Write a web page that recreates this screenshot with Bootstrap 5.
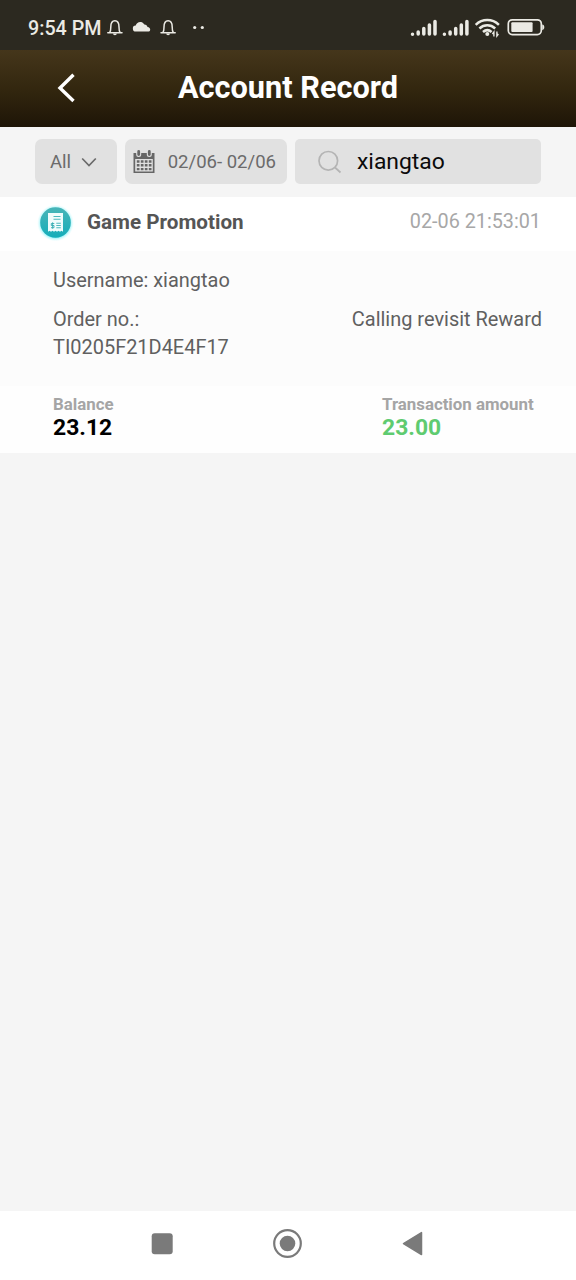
<!DOCTYPE html>
<html lang="en">
<head>
<meta charset="utf-8">
<meta name="viewport" content="width=device-width, initial-scale=1">
<title>Account Record</title>
<link href="https://cdn.jsdelivr.net/npm/bootstrap@5.3.0/dist/css/bootstrap.min.css" rel="stylesheet">
<style>
  body { font-family: Roboto, "Liberation Sans", sans-serif; background: #f5f5f5; color: #606060; font-size: 19.95px; line-height: 28px; }
  svg { display: block; flex: none; }
  .statusbar { height: 50px; background: #2c2920; color: #ebeae4; padding: 4px 31px 0 28px; font-size: 19.7px; font-weight: 500; }
  .clock { padding-top: 3px; }
  .titlebar { height: 77px; background: linear-gradient(#45361b, #33270f 50%, #1e1507); color: #fff; padding: 0 57px 2px; }
  .titlebar h1 { font-size: 30.7px; font-weight: 700; line-height: 36px; padding-top: 1px; }
  .side { width: 19px; }
  .filters { height: 70px; padding: 12px 35px 0; }
  .chip { height: 45px; background: #e1e1e1; border-radius: 7px; color: #6b6b6b; font-size: 18.55px; }
  .chip-all { width: 82px; margin-right: 8px; padding-left: 15px; padding-right: 20px; }
  .chip-date { width: 162px; margin-right: 8px; padding-left: 8px; padding-right: 11px; }
  .chip-search { width: 246px; border-radius: 5px; padding-left: 23px; gap: 15px; color: #0b0b0b; font-size: 22.9px; }
  .rec-head { height: 54px; background: #fff; padding: 0 35px 3px 36px; }
  .rec-head .kind { font-size: 20.65px; font-weight: 700; color: #555; margin-left: 12px; padding-bottom: 2px; }
  .rec-head .when { color: #a7a7a7; font-size: 19.8px; padding-bottom: 2px; }
  .rec-body { height: 135px; background: #fcfcfc; padding: 15px 34px 0 53px; }
  .rec-body .order { line-height: 27.5px; }
  .rec-foot { height: 67px; background: #fefefe; padding: 9px 0 0 53px; color: #a5a5a5; font-size: 16.85px; font-weight: 700; line-height: 19px; }
  .rec-foot .amount { font-size: 22.9px; line-height: 28px; color: #000; }
  .rec-foot .gain { color: #5fcb70; }
  .first-col { width: 329px; }
  .navkeys { height: 69px; background: #fff; padding: 0 153px 3px 151px; }
</style>
</head>
<body>
<div class="d-flex flex-column vh-100">
  <div class="statusbar d-flex align-items-center justify-content-between">
    <div class="d-flex align-items-center">
      <span class="clock">9:54 PM</span>
      <svg width="104" height="24" viewBox="101 15 104 24" fill="none" stroke="#ebeae4" stroke-width="1.5">
        <g id="bell"><path d="M107.800 32.800h14.200M109.700 32.500c1-1.200 1.100-2.500 1.100-5.500 0-4 1.400-6.300 4.100-6.300s4.100 2.300 4.100 6.300c0 3 .1 4.300 1.100 5.500" stroke-linecap="round"/><path d="M113 33.500a1.900 1.700 0 0 0 3.800 0z" fill="#ebeae4" stroke="none"/></g>
        <use href="#bell" x="53.200"/>
        <path d="M136 31.600a3 3 0 0 1-.3-6c.8-2.700 3-4 5.200-3.600 1.600.3 2.800 1.200 3.500 2.600 1.800.1 2.700 1 3.100 2.300 1.900.2 2.700 1.300 2.700 2.500 0 1.500-1 2.200-2.400 2.200z" fill="#ebeae4" stroke="none"/>
        <g fill="#ebeae4" stroke="none"><circle cx="194.700" cy="27.500" r="1.600"/><circle cx="202.300" cy="27.500" r="1.600"/></g>
      </svg>
    </div>
    <svg width="136" height="24" viewBox="409 15 136 24" fill="none" stroke="#ebeae4">
      <g id="bars" stroke-width="3.500" stroke-linecap="round"><path d="M412.500 34.200v.01M418.200 34v-2M423.800 34v-5.500M429.400 34v-9M435 34V21.500"/></g>
      <use href="#bars" x="31.900"/>
      <g stroke-width="2.500"><path d="M475.700 24.800c6.700-6.300 16.500-6.300 23.200 0M479.400 28.500c4.600-4.200 11.200-4.200 15.800 0M483 32c2.600-2.300 6-2.300 8.600 0"/></g>
      <circle cx="487.300" cy="34" r="2" fill="#ebeae4" stroke="none"/>
      <path d="M493.900 36.500v-4.500l-1.500 2M496.900 31.500v4.500l1.500-2" stroke-width="1.400"/>
      <rect x="508.300" y="19.800" width="33" height="14.800" rx="4" stroke-width="1.700"/>
      <rect x="511.300" y="22.300" width="21.300" height="9.800" rx="1" fill="#ebeae4" stroke="none"/>
      <path d="M542.200 24.500c2.800 0 2.800 5.400 0 5.400z" fill="#ebeae4" stroke="none"/>
    </svg>
  </div>

  <header class="titlebar d-flex align-items-center justify-content-between">
    <svg class="side" height="30" viewBox="0 0 19 30" fill="none" stroke="#fff" stroke-width="3.400"><path d="M16.500 1.700 3 15l13.500 13"/></svg>
    <h1 class="m-0">Account Record</h1>
    <span class="side"></span>
  </header>

  <section class="filters d-flex">
    <div class="chip chip-all d-flex align-items-center justify-content-between">
      <span>All</span>
      <svg width="16" height="10" viewBox="0 0 16 10" fill="none" stroke="#6b6b6b" stroke-width="1.700"><path d="M1.200 1.500 8 8.500l6.800-7"/></svg>
    </div>
    <div class="chip chip-date d-flex align-items-center justify-content-between">
      <svg width="22" height="24" viewBox="0 0 22 24">
        <path d="M.5 3h21v20H.5z" fill="#666"/>
        <path d="M2.200 9h17.600v12.500H2.200z" fill="#e1e1e1"/>
        <path d="M3.800 11.500h15M3.800 15.300h15M3.800 19.100h15" stroke="#666" stroke-width="2.400" stroke-dasharray="2.700 1.300"/>
        <path d="M3.200 0h5v4.500a2.500 2.500 0 0 1-5 0zM13.800 0h5v4.500a2.500 2.500 0 0 1-5 0z" fill="#e1e1e1"/>
        <path d="M5.700 1.500v3M16.300 1.500v3" stroke="#666" stroke-width="2.800" stroke-linecap="round"/>
      </svg>
      <span>02/06- 02/06</span>
    </div>
    <div class="chip chip-search d-flex align-items-center">
      <svg width="24" height="24" viewBox="0 0 24 24" fill="none" stroke="#b4b4b4" stroke-width="1.700"><circle cx="10.300" cy="10.800" r="9.300"/><path d="M17 17.500l5.500 5"/></svg>
      <span>xiangtao</span>
    </div>
  </section>

  <article>
    <div class="rec-head d-flex align-items-center">
      <svg width="39" height="39" viewBox="0 0 39 39">
        <defs>
          <linearGradient id="teal" x1="0" y1="0" x2="0" y2="1"><stop offset="0" stop-color="#49b5b8"/><stop offset="1" stop-color="#15adb9"/></linearGradient>
          <radialGradient id="halo"><stop offset=".78" stop-color="#8df1f6"/><stop offset="1" stop-color="#dffcff" stop-opacity="0"/></radialGradient>
        </defs>
        <circle cx="19.500" cy="20" r="18.500" fill="url(#halo)"/>
        <circle cx="19.500" cy="19.500" r="15.300" fill="url(#teal)"/>
        <path d="M12 10h15v18.800l-1.500-1-1.500 1-1.500-1-1.500 1-1.500-1-1.500 1-1.500-1-1.500 1-1.500-1-1.500 1z" fill="#f1fcfc"/>
        <path d="M17.500 13.500h7M17.500 16.200h7M20.300 20.300h4.500M20.300 22.500h4.500M20.300 24.800h4.500" stroke="#4db9be" stroke-width="1.100"/>
        <path d="M18.300 20.500h-3v2h2.700v2.200h-3M16.600 19.300v6.400" fill="none" stroke="#36adb3" stroke-width=".9"/>
      </svg>
      <span class="kind">Game Promotion</span>
      <span class="when ms-auto">02-06 21:53:01</span>
    </div>
    <div class="rec-body">
      <div>Username: xiangtao</div>
      <div class="order d-flex justify-content-between mt-2 pt-1">
        <div>Order no.:<br>TI0205F21D4E4F17</div>
        <div>Calling revisit Reward</div>
      </div>
    </div>
    <div class="rec-foot d-flex">
      <div class="first-col"><div>Balance</div><div class="amount">23.12</div></div>
      <div><div>Transaction amount</div><div class="amount gain">23.00</div></div>
    </div>
  </article>

  <nav class="navkeys d-flex align-items-center justify-content-between mt-auto">
    <svg width="22" height="22" viewBox="0 0 22 22"><rect x=".7" y=".3" width="21" height="21" rx="3" fill="#7a7a7a"/></svg>
    <svg width="30" height="30" viewBox="0 0 30 30"><circle cx="14.500" cy="14.500" r="13.300" fill="none" stroke="#7a7a7a" stroke-width="2.200"/><circle cx="14.500" cy="14.500" r="7.800" fill="#7a7a7a"/></svg>
    <svg width="21" height="26" viewBox="0 0 21 26"><path d="M19.500 1.600v22L1.500 12.600z" fill="#7a7a7a" stroke="#7a7a7a" stroke-width="1.500" stroke-linejoin="round"/></svg>
  </nav>
</div>
<script src="https://cdn.jsdelivr.net/npm/bootstrap@5.3.0/dist/js/bootstrap.bundle.min.js"></script>
</body>
</html>
